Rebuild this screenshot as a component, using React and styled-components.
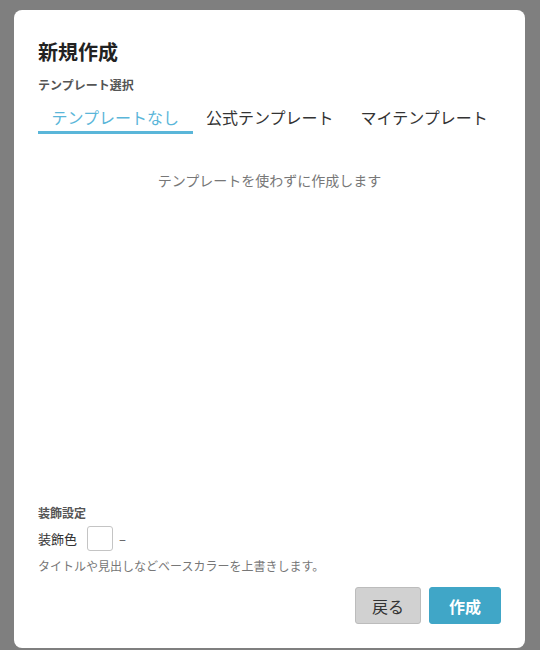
import React, { useState } from "react";
import styled, { createGlobalStyle } from "styled-components";

const GlobalStyle = createGlobalStyle`
  html, body {
    margin: 0;
    padding: 0;
    background: #7f7f7f;
    font-family: "Noto Sans CJK JP", "Noto Sans", sans-serif;
  }
`;

const Overlay = styled.div`
  width: 540px;
  height: 650px;
  padding: 10px 15px 2px 14px;
  box-sizing: border-box;
`;

const Modal = styled.div`
  background: #fff;
  border-radius: 8px;
  height: 638px;
  box-sizing: border-box;
  padding: 28px 24px 24px 24px;
  display: flex;
  flex-direction: column;
`;

const Title = styled.h2`
  margin: 0;
  font-size: 20px;
  line-height: 28px;
  font-weight: 700;
  color: #222;
`;

const SectionLabel = styled.div`
  margin-top: ${(props) => props.top || 0}px;
  font-size: 12px;
  line-height: 18px;
  font-weight: 700;
  color: #555;
`;

const TabList = styled.div`
  display: flex;
  margin-top: 5px;
`;

const Tab = styled.button`
  flex-shrink: 0;
  white-space: nowrap;
  background: none;
  border: none;
  border-bottom: 3px solid ${(props) => (props.active ? "#5ab6d9" : "transparent")};
  padding: 6px 13.5px 2px;
  font-family: inherit;
  font-size: 16px;
  line-height: 24px;
  color: ${(props) => (props.active ? "#5ab6d9" : "#333")};
  cursor: pointer;
`;

const Body = styled.div`
  flex: 1;
`;

const Empty = styled.p`
  margin: 36px 0 0;
  text-align: center;
  font-size: 14px;
  line-height: 20px;
  color: #777;
`;

const ColorRow = styled.div`
  display: flex;
  align-items: center;
  margin-top: 4px;
  font-size: 13px;
  color: #333;
`;

const Swatch = styled.div`
  width: 24px;
  height: 23px;
  margin: 0 6px 0 10px;
  border: 1px solid #c4c4c4;
  border-radius: 3px;
  background: #fff;
`;

const Dash = styled.span`
  color: #555;
`;

const Note = styled.p`
  margin: 6px 0 0;
  font-size: 12px;
  line-height: 18px;
  color: #777;
`;

const Actions = styled.div`
  display: flex;
  justify-content: flex-end;
  gap: 8px;
  margin-top: 12px;
`;

const Button = styled.button`
  height: 37px;
  box-sizing: border-box;
  padding: 0 ${(props) => (props.primary ? 19 : 16)}px;
  border-radius: 3px;
  border: 1px solid ${(props) => (props.primary ? "#40a6c7" : "#bcbcbc")};
  background: ${(props) => (props.primary ? "#40a6c7" : "#d1d1d1")};
  color: ${(props) => (props.primary ? "#fff" : "#333")};
  font-family: inherit;
  font-size: 16px;
  font-weight: ${(props) => (props.primary ? 700 : 400)};
  cursor: pointer;
`;

const tabs = ["テンプレートなし", "公式テンプレート", "マイテンプレート"];

export default function App() {
  const [active, setActive] = useState(0);

  return (
    <>
      <GlobalStyle />
      <Overlay>
        <Modal>
          <Title>新規作成</Title>
          <SectionLabel top={10}>テンプレート選択</SectionLabel>
          <TabList>
            {tabs.map((t, i) => (
              <Tab key={t} active={i === active} onClick={() => setActive(i)}>
                {t}
              </Tab>
            ))}
          </TabList>
          <Body>
            {active === 0 && <Empty>テンプレートを使わずに作成します</Empty>}
          </Body>
          <SectionLabel>装飾設定</SectionLabel>
          <ColorRow>
            装飾色
            <Swatch />
            <Dash>–</Dash>
          </ColorRow>
          <Note>タイトルや見出しなどベースカラーを上書きします。</Note>
          <Actions>
            <Button>戻る</Button>
            <Button primary>作成</Button>
          </Actions>
        </Modal>
      </Overlay>
    </>
  );
}
